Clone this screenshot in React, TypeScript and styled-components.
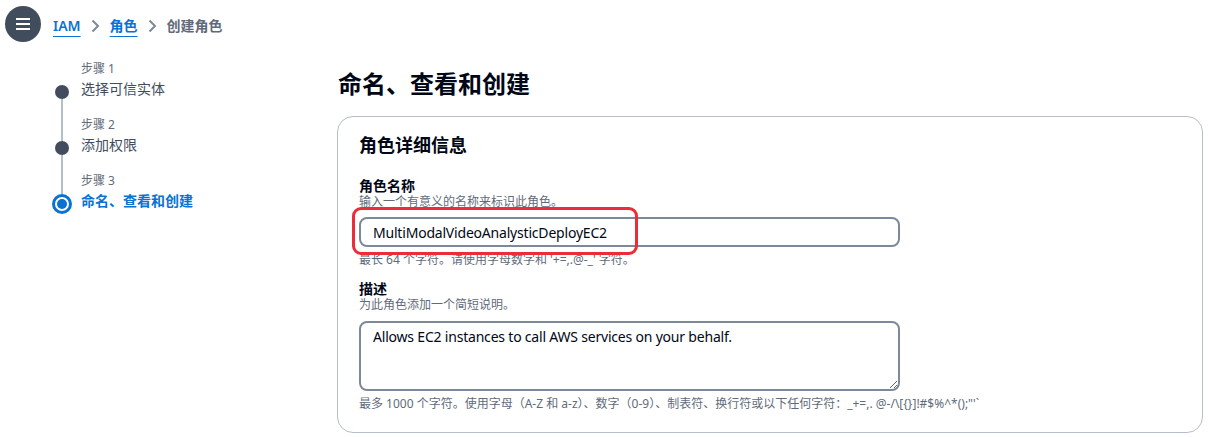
import React from "react";
import styled, { createGlobalStyle } from "styled-components";

const COLORS = {
  text: "#000716",
  muted: "#5f6b7a",
  dark: "#414d5c",
  link: "#0972d3",
  line: "#b6bec9",
  inputBorder: "#7d8998",
  highlight: "#ee2b38",
};

const GlobalStyle = createGlobalStyle`
  body {
    margin: 0;
    background: #ffffff;
    color: ${COLORS.text};
    font-family: "Noto Sans", "Noto Sans CJK SC", sans-serif;
  }
  * {
    box-sizing: border-box;
  }
`;

const TopBar = styled.div`
  height: 48px;
  display: flex;
  align-items: center;
  gap: 12px;
  padding-left: 5px;
`;

const MenuButton = styled.button`
  width: 36px;
  height: 36px;
  border-radius: 50%;
  border: none;
  background: ${COLORS.dark};
  display: flex;
  align-items: center;
  justify-content: center;
  padding: 0;
`;

const Crumbs = styled.nav`
  display: flex;
  align-items: center;
  gap: 10px;
  margin-top: 4px;
  font-size: 14px;
  line-height: 20px;
`;

const CrumbLink = styled.a`
  color: ${COLORS.link};
  font-weight: 600;
  text-decoration: underline;
  text-underline-offset: 5px;
`;

const CrumbCurrent = styled.span`
  color: ${COLORS.muted};
  font-weight: 700;
`;

const Body = styled.div`
  display: grid;
  grid-template-columns: 337px 1fr;
  padding-right: 11px;
`;

const StepList = styled.ol`
  list-style: none;
  margin: 0;
  padding: 11px 0 0 52px;
`;

const Step = styled.li`
  display: grid;
  grid-template-columns: 20px 1fr;
  column-gap: 9px;
  height: 56px;
`;

const Marker = styled.div`
  display: flex;
  flex-direction: column;
  align-items: center;
`;

const Connector = styled.div<{ $hidden?: boolean; $grow?: boolean }>`
  width: 2px;
  background: ${(p) => (p.$hidden ? "transparent" : COLORS.line)};
  ${(p) => (p.$grow ? "flex: 1;" : "")}
`;

const Dot = styled.span`
  width: 14px;
  height: 14px;
  border-radius: 50%;
  background: ${COLORS.dark};
`;

const StepText = styled.div`
  display: flex;
  flex-direction: column;
`;

const StepLabel = styled.span`
  font-size: 12px;
  line-height: 19px;
  color: ${COLORS.muted};
`;

const StepTitle = styled.span<{ $active?: boolean }>`
  font-size: 14px;
  line-height: 22px;
  color: ${(p) => (p.$active ? COLORS.link : COLORS.dark)};
  font-weight: ${(p) => (p.$active ? 700 : 400)};
`;

const Main = styled.main`
  padding-top: 20px;
`;

const PageTitle = styled.h1`
  margin: 0 0 16px 1px;
  font-size: 24px;
  line-height: 32px;
  font-weight: 700;
`;

const Card = styled.section`
  border: 1px solid ${COLORS.line};
  border-radius: 16px;
  padding: 16px 21px 20px;
`;

const CardTitle = styled.h2`
  margin: 0 0 21px;
  font-size: 18px;
  line-height: 24px;
  font-weight: 700;
`;

const Field = styled.div<{ $gap?: number }>`
  display: flex;
  flex-direction: column;
  margin-top: ${(p) => p.$gap ?? 0}px;
`;

const Label = styled.label`
  font-size: 14px;
  line-height: 16px;
  font-weight: 700;
`;

const Hint = styled.span<{ $top?: number }>`
  font-size: 12px;
  line-height: 16px;
  color: ${COLORS.muted};
  margin-top: ${(p) => p.$top ?? 0}px;
`;

const Control = styled.div<{ $top: number }>`
  position: relative;
  width: 541px;
  margin-top: ${(p) => p.$top}px;
`;

const TextInput = styled.input`
  display: block;
  width: 100%;
  height: 30px;
  border: 2px solid ${COLORS.inputBorder};
  border-radius: 8px;
  padding: 0 12px;
  font: inherit;
  font-size: 14px;
  letter-spacing: -0.2px;
  color: ${COLORS.text};
  outline: none;
`;

const TextArea = styled.textarea`
  display: block;
  width: 100%;
  height: 70px;
  border: 2px solid ${COLORS.inputBorder};
  border-radius: 8px;
  padding: 3px 12px;
  font: inherit;
  font-size: 14px;
  line-height: 22px;
  letter-spacing: -0.2px;
  color: ${COLORS.text};
  outline: none;
  resize: vertical;
`;

const Highlight = styled.div`
  position: absolute;
  left: -7px;
  top: -10px;
  width: 286px;
  height: 48px;
  border: 3.5px solid ${COLORS.highlight};
  border-radius: 9px;
  pointer-events: none;
`;

const steps = [
  { label: "步骤 1", title: "选择可信实体" },
  { label: "步骤 2", title: "添加权限" },
  { label: "步骤 3", title: "命名、查看和创建" },
];

const Chevron = () => (
  <svg width="9" height="14" viewBox="0 0 9 14" fill="none">
    <path d="M1.5 1.5 L7 7 L1.5 12.5" stroke="#7d8998" strokeWidth="2" />
  </svg>
);

const ActiveDot = () => (
  <svg width="20" height="20" viewBox="0 0 20 20">
    <circle cx="10" cy="10" r="8.5" fill="#fff" stroke={COLORS.link} strokeWidth="3" />
    <circle cx="10" cy="10" r="5" fill={COLORS.link} />
  </svg>
);

export default function App() {
  return (
    <>
      <GlobalStyle />
      <TopBar>
        <MenuButton aria-label="menu">
          <svg width="16" height="14" viewBox="0 0 16 14">
            <path d="M1 2h14M1 7h14M1 12h14" stroke="#fff" strokeWidth="2" />
          </svg>
        </MenuButton>
        <Crumbs>
          <CrumbLink>IAM</CrumbLink>
          <Chevron />
          <CrumbLink>角色</CrumbLink>
          <Chevron />
          <CrumbCurrent>创建角色</CrumbCurrent>
        </Crumbs>
      </TopBar>
      <Body>
        <StepList>
          {steps.map((s, i) => {
            const last = i === steps.length - 1;
            return (
              <Step key={s.label}>
                <Marker>
                  <Connector $hidden={i === 0} style={{ height: last ? 23 : 26 }} />
                  {last ? <ActiveDot /> : <Dot />}
                  <Connector $hidden={last} $grow />
                </Marker>
                <StepText>
                  <StepLabel>{s.label}</StepLabel>
                  <StepTitle $active={last}>{s.title}</StepTitle>
                </StepText>
              </Step>
            );
          })}
        </StepList>
        <Main>
          <PageTitle>命名、查看和创建</PageTitle>
          <Card>
            <CardTitle>角色详细信息</CardTitle>
            <Field>
              <Label>角色名称</Label>
              <Hint>输入一个有意义的名称来标识此角色。</Hint>
              <Control $top={7}>
                <TextInput readOnly value="MultiModalVideoAnalysticDeployEC2" />
                <Highlight />
              </Control>
              <Hint $top={5}>最长 64 个字符。请使用字母数字和 '+=,.@-_' 字符。</Hint>
            </Field>
            <Field $gap={13}>
              <Label>描述</Label>
              <Hint>为此角色添加一个简短说明。</Hint>
              <Control $top={8}>
                <TextArea
                  readOnly
                  value="Allows EC2 instances to call AWS services on your behalf."
                />
              </Control>
              <Hint $top={5}>
                最多 1000 个字符。使用字母（A-Z 和 a-z）、数字（0-9）、制表符、换行符或以下任何字符：_+=,. @-/\[{"{}"}]!#$%^*();"'`
              </Hint>
            </Field>
          </Card>
        </Main>
      </Body>
    </>
  );
}
